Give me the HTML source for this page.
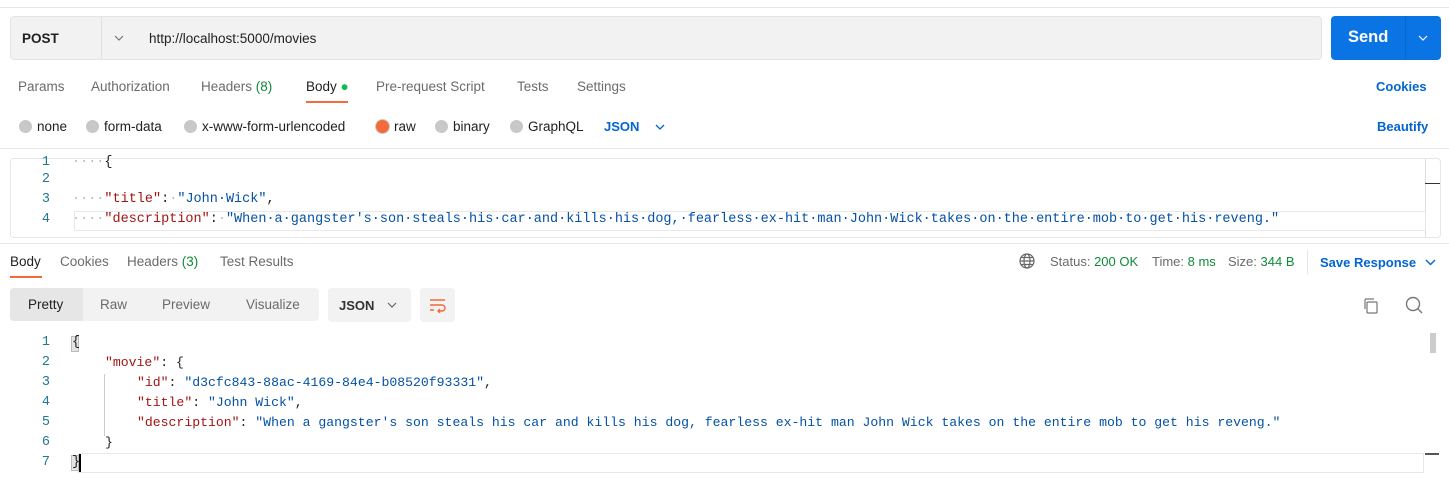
<!DOCTYPE html>
<html><head><style>
*{box-sizing:border-box;margin:0;padding:0}
body{width:1449px;height:497px;background:#fff;font-family:"Liberation Sans",sans-serif;font-size:13px;color:#212121;position:relative;overflow:hidden}
.a{position:absolute;white-space:pre}
.mono{font-family:"Liberation Mono",monospace;font-size:13.5px}
.m2{font-family:"Liberation Mono",monospace;font-size:13.15px}
.k{color:#a31515}.s{color:#0451a5}.ln{color:#237893;text-align:right;width:20px}
.g{color:#6b6b6b}.gr{color:#0f8a3a}.bl{color:#0265d2;font-weight:bold}
.rad{display:inline-block;width:13px;height:13px;border-radius:50%;background:#c8c8c8;vertical-align:-2px;margin-right:5px}
.dot{color:#bbb}
</style></head><body>
<div class="a" style="left:0;top:7px;width:1449px;height:1px;background:#e6e6e6"></div>
<div class="a" style="left:10px;top:16px;width:1312px;height:44px;background:#f2f2f2;border:1px solid #e4e4e4;border-radius:4px"></div>
<div class="a" style="left:101px;top:17px;width:1px;height:42px;background:#e0e0e0"></div>
<div class="a" style="left:22px;top:31px;font-weight:bold;font-size:13.5px">POST</div>
<svg class="a" style="left:114px;top:35px" width="10" height="6" viewBox="0 0 10 6" fill="none" stroke="#777" stroke-width="1.2"><path d="M1 1l4 4 4-4"/></svg>
<div class="a" style="left:149px;top:31px;font-size:13.5px">http://localhost:5000/movies</div>
<div class="a" style="left:1331px;top:16px;width:110px;height:44px;background:#0b74e5;border-radius:4px"></div>
<div class="a" style="left:1405px;top:16px;width:1px;height:44px;background:#0a68cc"></div>
<div class="a" style="left:1348px;top:28px;color:#fff;font-weight:bold;font-size:16.5px">Send</div>
<svg class="a" style="left:1418px;top:35px" width="10" height="6" viewBox="0 0 10 6" fill="none" stroke="#fff" stroke-width="1.2"><path d="M1 1l4 4 4-4"/></svg>

<div class="a g" style="left:18px;top:79px;font-size:13.5px">Params</div>
<div class="a g" style="left:91px;top:79px;font-size:13.5px">Authorization</div>
<div class="a g" style="left:201px;top:79px;font-size:13.5px">Headers <span class="gr">(8)</span></div>
<div class="a" style="left:306px;top:79px;font-size:13.5px">Body <span style="color:#0cbb52">●</span></div>
<div class="a" style="left:306px;top:101px;width:42px;height:2px;background:#f26b3a"></div>
<div class="a g" style="left:376px;top:79px;font-size:13.5px">Pre-request Script</div>
<div class="a g" style="left:517px;top:79px;font-size:13.5px">Tests</div>
<div class="a g" style="left:577px;top:79px;font-size:13.5px">Settings</div>
<div class="a bl" style="left:1376px;top:79px;font-size:13px">Cookies</div>

<div class="a" style="left:19px;top:119px;font-size:13.5px"><span class="rad"></span>none</div>
<div class="a" style="left:86px;top:119px;font-size:13.5px"><span class="rad"></span>form-data</div>
<div class="a" style="left:184px;top:119px;font-size:13.5px"><span class="rad"></span>x-www-form-urlencoded</div>
<div class="a" style="left:376px;top:119px;font-size:13.5px"><span class="rad" style="background:#f26b3a;box-shadow:0 0 0 1px #d9c8c0"></span>raw</div>
<div class="a" style="left:435px;top:119px;font-size:13.5px"><span class="rad"></span>binary</div>
<div class="a" style="left:510px;top:119px;font-size:13.5px"><span class="rad"></span>GraphQL</div>
<div class="a bl" style="left:604px;top:119px;font-size:13px">JSON</div>
<svg class="a" style="left:655px;top:124px" width="10" height="6" viewBox="0 0 10 6" fill="none" stroke="#0265d2" stroke-width="1.3"><path d="M1 1l4 4 4-4"/></svg>
<div class="a bl" style="left:1377px;top:119px;font-size:13px">Beautify</div>
<div class="a" style="left:0;top:148px;width:1449px;height:1px;background:#e6e6e6"></div>

<div class="a" style="left:10px;top:158px;width:1431px;height:80px;border:1px solid #e6e6e6;border-radius:4px;overflow:hidden">
<div class="a" style="left:1414px;top:0;width:1px;height:80px;background:#ddd"></div>
<div class="a" style="left:1414px;top:24px;width:16px;height:1px;background:#333"></div>
<div class="a" style="left:63px;top:52px;width:1352px;height:20px;border:1px solid #e8e8e8"></div>
</div>
<div class="a mono ln" style="left:30px;top:155px">1</div>
<div class="a mono ln" style="left:30px;top:172px">2</div>
<div class="a mono ln" style="left:30px;top:192px">3</div>
<div class="a mono ln" style="left:30px;top:212px">4</div>
<div class="a mono" style="left:72px;top:155px"><span class="dot">····</span>{</div>
<div class="a mono" style="left:72px;top:192px"><span class="dot">····</span><span class="k">"title"</span>:<span class="dot">·</span><span class="s">"John·Wick"</span>,</div>
<div class="a mono" style="left:72px;top:212px"><span class="dot">····</span><span class="k">"description"</span>:<span class="dot">·</span><span class="s">"When·a·gangster's·son·steals·his·car·and·kills·his·dog,·fearless·ex-hit·man·John·Wick·takes·on·the·entire·mob·to·get·his·reveng."</span></div>
<div class="a" style="left:0;top:243px;width:1449px;height:1px;background:#e6e6e6"></div>

<div class="a" style="left:10px;top:254px;font-size:13.5px">Body</div>
<div class="a" style="left:10px;top:276px;width:32px;height:2px;background:#f26b3a"></div>
<div class="a g" style="left:60px;top:254px;font-size:13.5px">Cookies</div>
<div class="a g" style="left:127px;top:254px;font-size:13.5px">Headers <span class="gr">(3)</span></div>
<div class="a g" style="left:220px;top:254px;font-size:13.5px">Test Results</div>
<svg class="a" style="left:1019px;top:253px" width="16" height="16" viewBox="0 0 16 16" fill="none" stroke="#666" stroke-width="1.2"><circle cx="8" cy="8" r="7"/><ellipse cx="8" cy="8" rx="3" ry="7"/><path d="M1 8h14M2.5 4.5h11M2.5 11.5h11"/></svg>
<div class="a g" style="left:1050px;top:254px;font-size:13px">Status: <span class="gr">200 OK</span></div>
<div class="a g" style="left:1152px;top:254px;font-size:13px">Time: <span class="gr">8 ms</span></div>
<div class="a g" style="left:1228px;top:254px;font-size:13px">Size: <span class="gr">344 B</span></div>
<div class="a" style="left:1307px;top:250px;width:1px;height:24px;background:#e6e6e6"></div>
<div class="a bl" style="left:1320px;top:255px;font-size:13px">Save Response</div>
<svg class="a" style="left:1425px;top:259px" width="11" height="7" viewBox="0 0 11 7" fill="none" stroke="#0265d2" stroke-width="1.4"><path d="M1 1l4.5 4.5L10 1"/></svg>

<div class="a" style="left:10px;top:288px;width:309px;height:33px;background:#f2f2f2;border-radius:4px"></div>
<div class="a" style="left:10px;top:288px;width:73px;height:33px;background:#e6e6e6;border-radius:4px 0 0 4px"></div>
<div class="a" style="left:28px;top:297px;font-size:13.5px">Pretty</div>
<div class="a g" style="left:100px;top:297px;font-size:13.5px">Raw</div>
<div class="a g" style="left:162px;top:297px;font-size:13.5px">Preview</div>
<div class="a g" style="left:246px;top:297px;font-size:13.5px">Visualize</div>
<div class="a" style="left:328px;top:288px;width:83px;height:34px;background:#f2f2f2;border-radius:4px"></div>
<div class="a" style="left:339px;top:298px;font-weight:bold;font-size:13px;color:#333">JSON</div>
<svg class="a" style="left:387px;top:302px" width="10" height="6" viewBox="0 0 10 6" fill="none" stroke="#666" stroke-width="1.2"><path d="M1 1l4 4 4-4"/></svg>
<div class="a" style="left:420px;top:288px;width:35px;height:34px;background:#f2f2f2;border-radius:4px"></div>
<svg class="a" style="left:428px;top:297px" width="20" height="16" viewBox="0 0 20 16" fill="none" stroke="#f26b3a" stroke-width="1.4"><path d="M2 3h15M2 8h12a3 3 0 0 1 0 6h-4M12 12l-2 2 2 2M2 13h4"/></svg>
<svg class="a" style="left:1362px;top:297px" width="18" height="18" viewBox="0 0 18 18" fill="none" stroke="#777" stroke-width="1.2"><rect x="5" y="5" width="10" height="11" rx="1"/><path d="M3 12V3a1 1 0 0 1 1-1h8"/></svg>
<svg class="a" style="left:1405px;top:296px" width="18" height="18" viewBox="0 0 18 18" fill="none" stroke="#777" stroke-width="1.4"><circle cx="8" cy="8" r="6.5"/><path d="M12.6 12.6L17 17"/></svg>

<div class="a" style="left:1430px;top:333px;width:6px;height:20px;background:#ccc"></div>
<div class="a" style="left:1425px;top:453px;width:14px;height:2px;background:#555"></div>
<div class="a" style="left:78px;top:453px;width:1346px;height:20px;border:1px solid #e8e8e8"></div>
<div class="a" style="left:71px;top:336px;width:8px;height:16px;background:#e4e4e4;border:1px solid #bbb"></div>
<div class="a" style="left:71px;top:455px;width:8px;height:16px;background:#e4e4e4;border:1px solid #bbb"></div>
<div class="a" style="left:79px;top:454px;width:2px;height:18px;background:#000"></div>
<div class="a" style="left:104px;top:374px;width:1px;height:62px;background:#ccc"></div>
<div class="a mono ln" style="left:30px;top:335px">1</div>
<div class="a mono ln" style="left:30px;top:355px">2</div>
<div class="a mono ln" style="left:30px;top:375px">3</div>
<div class="a mono ln" style="left:30px;top:395px">4</div>
<div class="a mono ln" style="left:30px;top:415px">5</div>
<div class="a mono ln" style="left:30px;top:435px">6</div>
<div class="a mono ln" style="left:30px;top:455px">7</div>
<div class="a mono" style="left:72px;top:335px">{</div>
<div class="a m2" style="left:105px;top:355px"><span class="k">"movie"</span>: {</div>
<div class="a m2" style="left:137px;top:375px"><span class="k">"id"</span>: <span class="s">"d3cfc843-88ac-4169-84e4-b08520f93331"</span>,</div>
<div class="a m2" style="left:137px;top:395px"><span class="k">"title"</span>: <span class="s">"John Wick"</span>,</div>
<div class="a m2" style="left:137px;top:415px"><span class="k">"description"</span>: <span class="s">"When a gangster's son steals his car and kills his dog, fearless ex-hit man John Wick takes on the entire mob to get his reveng."</span></div>
<div class="a m2" style="left:105px;top:435px">}</div>
<div class="a mono" style="left:72px;top:455px">}</div>
</body></html>
